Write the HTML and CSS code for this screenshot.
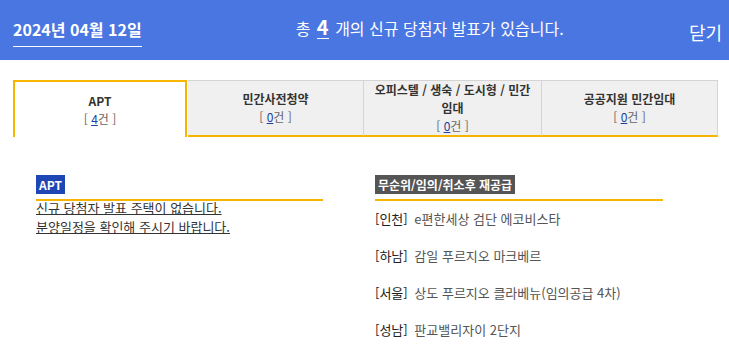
FILE: index.html
```html
<!DOCTYPE html>
<html lang="ko">
<head>
    <meta charset="UTF-8">
    <meta name="viewport" content="width=device-width, initial-scale=1.0">
    <title>신규 당첨자 발표</title>
    <link rel="stylesheet" href="styles.css">
</head>
<body>
    <!-- 상단 헤더 -->
    <div class="top-bar">
        <span class="today">2024년 04월 12일</span>
        <p class="notice">총 <span class="total">4</span> 개의 신규 당첨자 발표가 있습니다.</p>
        <a class="close" href="#">닫기</a>
    </div>

    <!-- 유형 탭 -->
    <ul class="tabs">
        <li class="tab active">
            <strong>APT</strong>
            <span class="count">[ <a href="#">4</a>건 ]</span>
        </li>
        <li class="tab">
            <strong>민간사전청약</strong>
            <span class="count">[ <a href="#">0</a>건 ]</span>
        </li>
        <li class="tab">
            <strong>오피스텔 / 생숙 / 도시형 / 민간 임대</strong>
            <span class="count">[ <a href="#">0</a>건 ]</span>
        </li>
        <li class="tab">
            <strong>공공지원 민간임대</strong>
            <span class="count">[ <a href="#">0</a>건 ]</span>
        </li>
    </ul>

    <!-- 당첨자 목록 -->
    <div class="content">
        <div class="column">
            <div class="column-head"><span class="label label-blue">APT</span></div>
            <p class="empty">
                <a href="#">신규 당첨자 발표 주택이 없습니다.</a><br>
                <a href="#">분양일정을 확인해 주시기 바랍니다.</a>
            </p>
        </div>
        <div class="column">
            <div class="column-head"><span class="label label-gray">무순위/임의/취소후 재공급</span></div>
            <ul class="house-list">
                <li><span class="area">[인천]</span> e편한세상 검단 에코비스타</li>
                <li><span class="area">[하남]</span> 감일 푸르지오 마크베르</li>
                <li><span class="area">[서울]</span> 상도 푸르지오 클라베뉴(임의공급 4차)</li>
                <li><span class="area">[성남]</span> 판교밸리자이 2단지</li>
            </ul>
        </div>
    </div>
</body>
</html>
```

FILE: styles.css
```css
body {
    margin: 0;
    padding: 0;
    font-family: "Noto Sans CJK KR", "Noto Sans", sans-serif;
    background: white;
    color: #333;
}
.top-bar {
    display: flex;
    align-items: center;
    height: 60px;
    padding: 0 7px 0 13px;
    background: #4a76e2;
    color: white;
}
.today {
    font-size: 16px;
    font-weight: bold;
    padding-bottom: 5px;
    border-bottom: 1px solid white;
    margin-top: 3px;
}
.notice {
    flex: 1;
    margin: 0 0 4px 0;
    padding-left: 154px;
    font-size: 16px;
}
.total {
    display: inline-block;
    font-size: 20px;
    font-weight: bold;
    line-height: 22px;
    border-bottom: 1px solid white;
    margin: 0 2px;
}
.close {
    color: white;
    text-decoration: none;
    font-size: 18px;
    margin-top: 4px;
}
.tabs {
    display: grid;
    grid-template-columns: 175px 176px 178px 176px;
    margin: 20px 11px 0 13px;
    padding: 0;
    list-style: none;
}
.tab {
    display: flex;
    flex-direction: column;
    justify-content: center;
    align-items: center;
    height: 54px;
    padding: 0 3px;
    background: #f0f0f0;
    border: 1px solid #d4d4d4;
    border-left: none;
    border-bottom: 2px solid #f7b500;
    text-align: center;
    font-size: 12px;
    line-height: 18px;
    word-break: keep-all;
}
.tab strong {
    color: #333;
}
.tab.active {
    background: white;
    border: 2px solid #f7b500;
    border-bottom: none;
    height: 55px;
    margin-right: 1px;
}
.count {
    color: #666;
}
.count a {
    color: #1a3fa0;
}
.content {
    display: grid;
    grid-template-columns: 287px 288px;
    column-gap: 52px;
    padding: 34px 23px 0 36px;
}
.column-head {
    padding-bottom: 4px;
    border-bottom: 2px solid #f7b500;
}
.label {
    display: inline-block;
    padding: 1px 3px;
    color: white;
    font-size: 12px;
    font-weight: bold;
    line-height: 17px;
}
.label-blue {
    background: #1e46b4;
    margin-top: 2px;
}
.label-gray {
    background: #555;
}
.empty {
    margin: -3px 0 0 0;
    font-size: 13px;
    line-height: 19px;
}
.empty a {
    color: #333;
}
.house-list {
    margin: 0;
    padding: 0;
    list-style: none;
}
.house-list li {
    padding: 9px 0 10px 0;
    font-size: 13px;
    line-height: 18px;
    color: #555;
}
.area {
    color: #222;
    margin-right: 3px;
}
```
